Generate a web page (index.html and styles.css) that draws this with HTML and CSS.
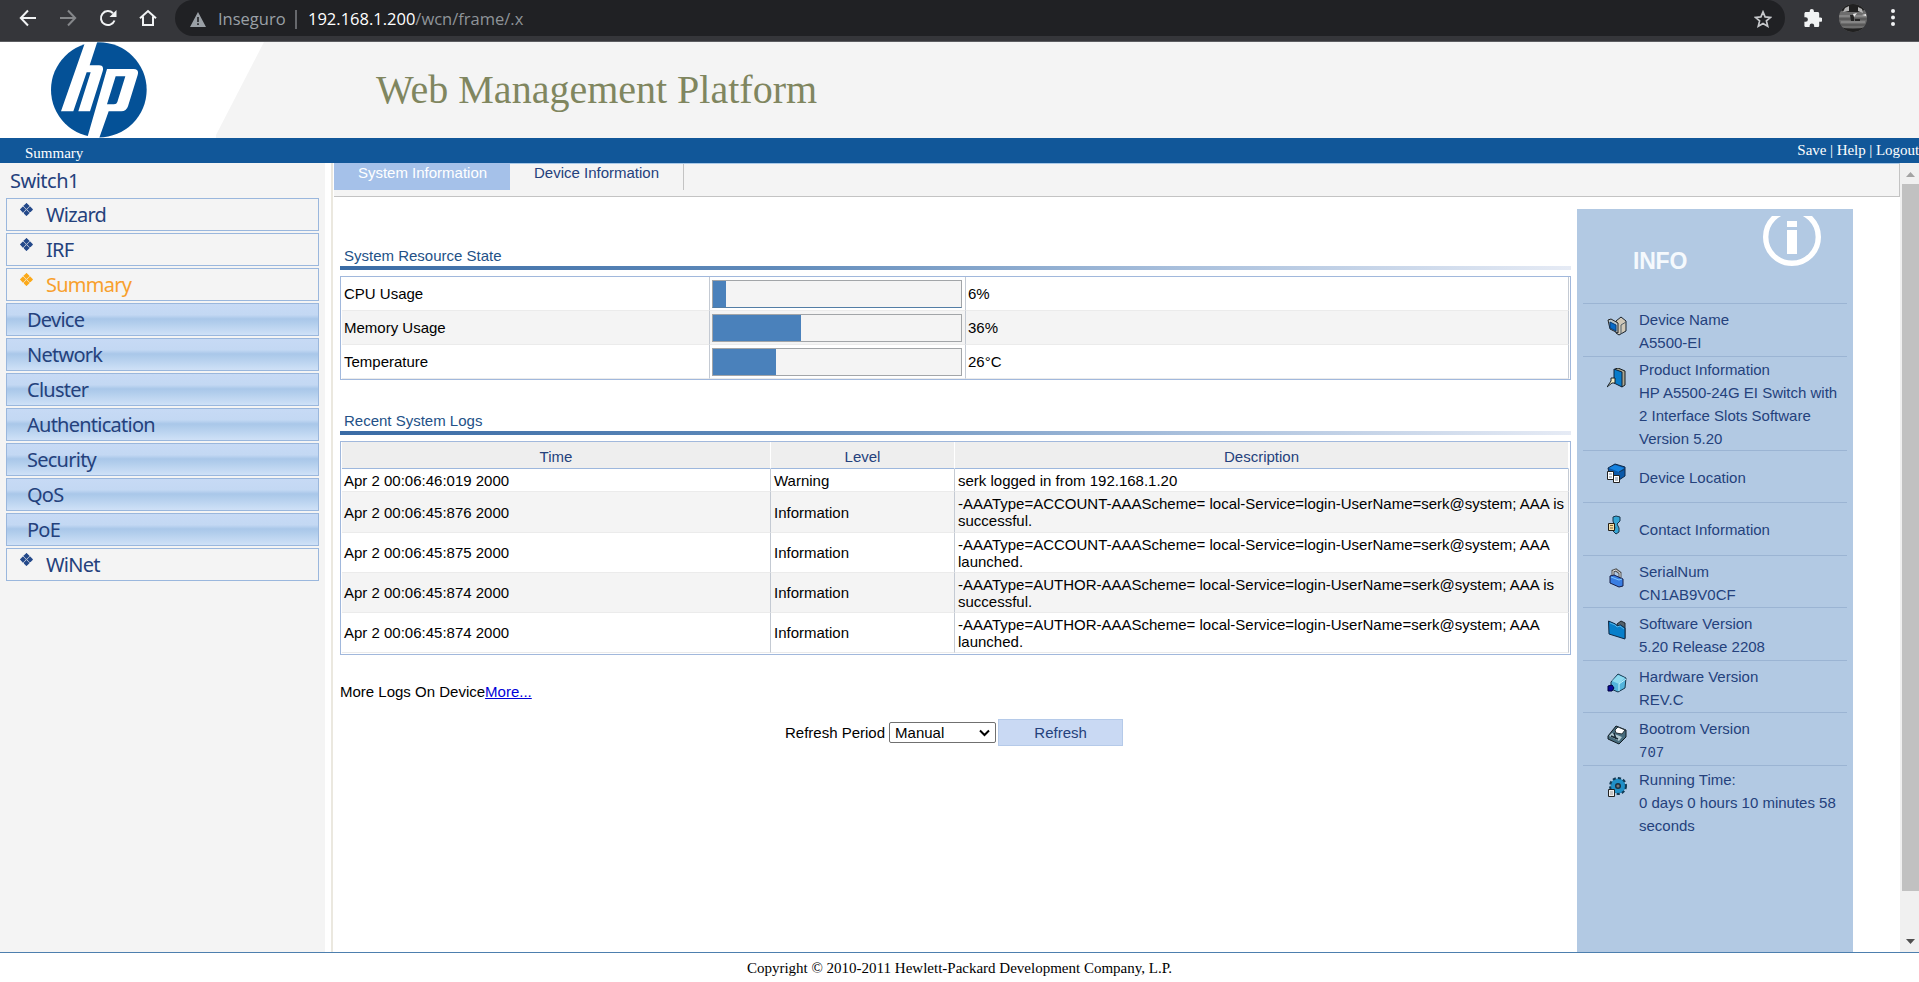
FILE: index.html
```html
<!DOCTYPE html>
<html lang="en">
<head>
<meta charset="utf-8">
<title>Web Management Platform</title>
<link rel="stylesheet" href="styles.css">
</head>
<body>
<svg class="defs" width="0" height="0">
  <defs>
    <g id="clover"><path d="M6.500 .3l2.700 2.700-2.700 2.700-2.700-2.700zM3 3.800l2.700 2.700L3 9.200.3 6.500zM10 3.800l2.700 2.700L10 9.200 7.300 6.500zM6.500 7.300l2.700 2.700-2.700 2.700-2.700-2.700z" stroke="currentColor" stroke-width="1" stroke-linejoin="round"/></g>
  </defs>
</svg>

<div class="browser">
  <div class="browser-nav">
    <svg width="18" height="18" viewBox="0 0 18 18" fill="none" stroke="#f1f3f4" stroke-width="2"><path d="M17 9H2M9 1.500L1.800 9 9 16.500"/></svg>
    <svg width="18" height="18" viewBox="0 0 18 18" fill="none" stroke="#85878a" stroke-width="2"><path d="M1 9h15M9 1.500L16.200 9 9 16.500"/></svg>
    <svg width="18" height="18" viewBox="0 0 18 18" fill="none" stroke="#f1f3f4" stroke-width="2"><path d="M15.500 11.500A7 7 0 1 1 14 4.200"/><path d="M17.500 1v7h-7z" fill="#f1f3f4" stroke="none"/></svg>
    <svg width="18" height="18" viewBox="0 0 18 18" fill="none" stroke="#f1f3f4" stroke-width="2"><path d="M1 9.200L9 2l8 7.200M4 7.500V16h10V7.500"/></svg>
  </div>
  <div class="omnibox">
    <svg width="16" height="15" viewBox="0 0 16 15"><path d="M8 0l8 15H0z" fill="#9aa0a6"/><path d="M7.200 5h1.600v5H7.200zM7.200 11.300h1.600v1.700H7.200z" fill="#202124"/></svg>
    <span class="insecure">Inseguro</span><span class="divider"></span><span class="host">192.168.1.200</span><span class="path">/wcn/frame/.x</span>
    <svg class="star" width="18" height="18" viewBox="0 0 18 18" fill="none" stroke="#c6c8cb" stroke-width="1.700"><path d="M9 1.900l2.100 5 5.400.5-4.100 3.500 1.300 5.300L9 13.400l-4.700 2.800 1.300-5.300L1.500 7.400l5.400-.5z"/></svg>
  </div>
  <div class="browser-tools">
    <svg width="18" height="18" viewBox="0 0 18 18"><path fill="#f1f3f4" d="M16.400 8.500h-1.200V4.700c0-.9-.7-1.600-1.600-1.600H9.900V2.100a2.100 2.100 0 0 0-4.200 0v1H2C1.100 3.100.4 3.800.4 4.700v3.500h1.200a2.300 2.300 0 0 1 0 4.600H.4v3.600c0 .9.700 1.600 1.600 1.600h3.600v-1.300a2.300 2.300 0 0 1 4.600 0V18h3.400c.9 0 1.600-.7 1.600-1.600v-3.700h1.200a2.100 2.100 0 0 0 0-4.200z"/></svg>
    <svg width="28" height="28" viewBox="0 0 28 28"><defs><clipPath id="avatar"><circle cx="14" cy="14" r="14"/></clipPath></defs><g clip-path="url(#avatar)"><path fill="#6d6d6d" d="M0 0h28v28H0z"/><path fill="#202020" d="M0 0h28v5l-8 3H8L0 6zM0 23q14 3 28 0v5H0z"/><path stroke="#8d8d8d" stroke-width="1.500" d="M0 12h28M2 18h24"/><path stroke="#555" stroke-width="1.500" d="M0 15h28M0 21h28"/><path fill="#b5b5b5" d="M6 4l4-2v5L4 8zM19 3l4 2 1 4-5-2z"/><path fill="#242424" d="M11 11h4v6h-3zM16 15h5v2h-5z"/><path fill="#eee" d="M14 10l4-1-3 4zM23 11l4-1v2z"/></g></svg>
    <svg width="4" height="18" viewBox="0 0 4 18" fill="#f1f3f4"><circle cx="2" cy="2" r="2"/><circle cx="2" cy="8.500" r="2"/><circle cx="2" cy="15" r="2"/></svg>
  </div>
</div>

<header class="banner">
  <svg class="logo" width="120" height="96" viewBox="0 12 360 288"><ellipse cx="176.500" cy="155.500" rx="143.500" ry="143" fill="#045197"/><path fill="#fff" d="M137 8h36L149 82h28q16 0 11 18l-38 120h-35l37-117h-12L100 220H63zM201 93h80q17 0 12 18l-29 94q-5 15-20 15h-38l-29 82h-36zM227 115l-26 84h21q8 0 10-7l24-77z"/></svg>
  <h1>Web Management Platform</h1>
</header>

<div class="crumbs"><span class="crumb">Summary</span><span class="session">Save | Help | Logout</span></div>

<div class="frames">
  <nav class="sidebar">
    <div class="device">Switch1</div>
    <a class="item leaf"><svg width="13" height="13"><use href="#clover"/></svg>Wizard</a>
    <a class="item leaf"><svg width="13" height="13"><use href="#clover"/></svg>IRF</a>
    <a class="item leaf current"><svg width="13" height="13"><use href="#clover"/></svg>Summary</a>
    <a class="item group">Device</a>
    <a class="item group">Network</a>
    <a class="item group">Cluster</a>
    <a class="item group">Authentication</a>
    <a class="item group">Security</a>
    <a class="item group">QoS</a>
    <a class="item group">PoE</a>
    <a class="item leaf"><svg width="13" height="13"><use href="#clover"/></svg>WiNet</a>
  </nav>

  <main class="main">
    <div class="tabs"><span class="tab active">System Information</span><span class="tab">Device Information</span></div>
    <div class="columns">
      <section class="report">
        <h2>System Resource State</h2>
        <table class="grid resources">
          <colgroup><col class="c-name"><col class="c-bar"><col></colgroup>
          <tr><td>CPU Usage</td><td class="bar-cell"><div class="bar cpu"><div class="fill" style="width:13px"></div></div></td><td>6%</td></tr>
          <tr><td>Memory Usage</td><td class="bar-cell"><div class="bar"><div class="fill" style="width:88px"></div></div></td><td>36%</td></tr>
          <tr><td>Temperature</td><td class="bar-cell"><div class="bar"><div class="fill" style="width:63px"></div></div></td><td>26°C</td></tr>
        </table>
        <h2>Recent System Logs</h2>
        <table class="grid logs">
          <colgroup><col class="c-time"><col class="c-level"><col></colgroup>
          <tr class="head"><th>Time</th><th>Level</th><th>Description</th></tr>
          <tr class="short"><td>Apr 2 00:06:46:019 2000</td><td>Warning</td><td>serk logged in from 192.168.1.20</td></tr>
          <tr class="tall"><td>Apr 2 00:06:45:876 2000</td><td>Information</td><td>-AAAType=ACCOUNT-AAAScheme= local-Service=login-UserName=serk@system; AAA is<br>successful.</td></tr>
          <tr><td>Apr 2 00:06:45:875 2000</td><td>Information</td><td>-AAAType=ACCOUNT-AAAScheme= local-Service=login-UserName=serk@system; AAA<br>launched.</td></tr>
          <tr><td>Apr 2 00:06:45:874 2000</td><td>Information</td><td>-AAAType=AUTHOR-AAAScheme= local-Service=login-UserName=serk@system; AAA is<br>successful.</td></tr>
          <tr><td>Apr 2 00:06:45:874 2000</td><td>Information</td><td>-AAAType=AUTHOR-AAAScheme= local-Service=login-UserName=serk@system; AAA<br>launched.</td></tr>
        </table>
        <p class="more">More Logs On Device<a href="#">More...</a></p>
        <div class="refresh"><span>Refresh Period</span><span class="select">Manual<svg width="11" height="8" viewBox="0 0 11 8" fill="none" stroke="#000" stroke-width="2"><path d="M1 1.500l4.500 4.500L10 1.500"/></svg></span><span class="button">Refresh</span></div>
      </section>

      <aside class="info">
        <div class="info-head"><span>INFO</span>
          <svg width="58" height="50" viewBox="0 0 58 50"><circle cx="29" cy="21" r="26.300" fill="none" stroke="#fff" stroke-width="5.400"/><path d="M24 5h10v6H24zM24 14h10v24H24z" fill="#fff"/></svg>
        </div>
        <div class="entry">
          <svg width="20" height="20" viewBox="0 0 20 20"><path fill="#d0c8b8" stroke="#17202b" d="M9 5l5-4 5 4v10l-7 4-3-2z"/><path stroke="#51606b" d="M14 9v9M14 9l5-3"/><path fill="#b9c5cc" stroke="#222" d="M1 4l3-1 7 4v10l-8-4z"/><path fill="#086ac7" stroke="#083b73" d="M3 6l6 3v6l-6-3z"/></svg>
          <div>Device Name<br>A5500-EI</div></div>
        <div class="entry product">
          <svg width="20" height="20" viewBox="0 0 20 20"><path fill="#aaa791" stroke="#151b1e" d="M8 1l3-1 7 3v14l-3 2z"/><path fill="#087ccb" stroke="#102238" d="M7 1l8 3v15l-8-4z"/><path fill="#f2edc5" stroke="#182027" d="M4 10h4v5H5l-5 4 4-6z"/></svg>
          <div>Product Information<br>HP A5500-24G EI Switch with<br>2 Interface Slots Software<br>Version 5.20</div></div>
        <div class="entry single">
          <svg width="20" height="20" viewBox="0 0 20 20"><path fill="#0a58a8" stroke="#0b2748" d="M1 5l7-4 10 3v9l-6 4-9-3z"/><path fill="#1583e0" d="M2 5l6-3 9 3-5 4z"/><path stroke="#14365b" d="M12 9l6-3"/><path fill="#fff" stroke="#222" d="M.5 8.500h6v8h-6zM6.500 12.500h6v7h-6z"/><path stroke="#7b8c9c" d="M2 11h3M2 14h3M8 15h3M8 17h3"/></svg>
          <div>Device Location</div></div>
        <div class="entry single">
          <svg width="20" height="20" viewBox="0 0 20 20"><path fill="#35a5d4" stroke="#17344a" d="M6 2l3-1 4 1v4l-3 3 2 4v4l-3 2-3-3 2-3-2-7z"/><path fill="#f2dfa8" stroke="#251f16" d="M1.500 8.500h6v7h-6z"/><path stroke="#816231" d="M3 10.500h3M3 13h3"/></svg>
          <div>Contact Information</div></div>
        <div class="entry">
          <svg width="20" height="20" viewBox="0 0 20 20"><path fill="none" stroke="#555" stroke-width="3" d="M6 9V3l3-1 4 3v6"/><path fill="none" stroke="#ddd" d="M6 9V3l3-1 4 3v6"/><path fill="#397de2" stroke="#151d48" d="M3 8l4-1 9 4v7l-4 1-9-4z"/><path fill="none" stroke="#7cc7ff" d="M4 9l8 3 3-1"/></svg>
          <div>SerialNum<br>CN1AB9V0CF</div></div>
        <div class="entry">
          <svg width="20" height="20" viewBox="0 0 20 20"><path fill="#53616a" stroke="#1d252d" d="M10 4l4-3 4 2v15l-6-3z"/><path fill="#087fca" stroke="#0d2846" d="M1.500 1l7 3 2 2 3-1 4.500 3v11L2 14z"/><path fill="none" stroke="#53b2e4" d="M3 3l5 2 2 2 3-1 4 3"/></svg>
          <div>Software Version<br>5.20 Release 2208</div></div>
        <div class="entry">
          <svg width="20" height="20" viewBox="0 0 20 20"><path fill="#54b4dc" stroke="#17374d" d="M4 9l7-8 8 4-1 10-7 4-7-3z"/><path fill="#8edaf0" d="M5 8l6-6 7 3-6 6z"/><path stroke="#c0f0fb" d="M12 11l7-5M12 11v7"/><path fill="#08089b" stroke="#00003e" d="M1 13l4-1 2 3-2 3H1z"/></svg>
          <div>Hardware Version<br>REV.C</div></div>
        <div class="entry">
          <svg width="20" height="20" viewBox="0 0 20 20"><path fill="#466b7c" stroke="#101b22" d="M1 11L9 1l10 4v7l-7 7-11-5z"/><path fill="#b2cad2" d="M2 11l3-3 10 4-3 4z"/><path fill="#fff" stroke="#29353b" d="M8 5l3-3 7 3-3 4-6-1z"/><path stroke="#172a36" stroke-width="1.500" d="M4 11l7 3M7 8l2 6"/></svg>
          <div>Bootrom Version<br><span class="mono">707</span></div></div>
        <div class="entry last">
          <svg width="20" height="20" viewBox="0 0 20 20"><circle cx="11" cy="9" r="7.500" fill="#1687be" stroke="#123a55" stroke-width="3" stroke-dasharray="3 2"/><circle cx="11" cy="9" r="7" fill="#208fc7"/><circle cx="11" cy="9" r="2.300" fill="#777" stroke="#193042" stroke-width="1.500"/><path fill="#eee" stroke="#222" d="M1.500 12.500h6v7h-6z"/><path stroke="#9a9a9a" d="M3 15h3M3 17h3"/></svg>
          <div>Running Time:<br>0 days 0 hours 10 minutes 58<br>seconds</div></div>
      </aside>
    </div>
  </main>

  <div class="scrollbar"><svg width="9" height="5"><path d="M0 5l4.500-5L9 5z" fill="#a3a3a3"/></svg><div class="thumb"></div><svg class="down" width="9" height="5"><path d="M0 0h9L4.500 5z" fill="#505050"/></svg></div>
</div>

<footer class="footer">Copyright © 2010-2011 Hewlett-Packard Development Company, L.P.</footer>
</body>
</html>
```
FILE: styles.css
```css
* { box-sizing: border-box; }
body { margin: 0; width: 1919px; height: 982px; overflow: hidden; display: flex; flex-direction: column; background: #fff; font: 15px/17px "Liberation Sans", Arial, sans-serif; color: #000; }
svg { flex: none; display: block; }
.defs { position: absolute; }

.browser { height: 42px; flex: none; display: flex; background: #35363a; border-bottom: 1px solid #5c5d61; }
.browser-nav { width: 175px; padding: 9px 0 0 19px; display: flex; gap: 22px; }
.omnibox { width: 1610px; height: 36px; border-radius: 18px; background: #202124; display: flex; align-items: center; padding: 2px 16px 0 15px; font: 16.500px/20px "Open Sans", sans-serif; color: #9aa0a6; }
.insecure { margin-left: 12px; width: 77px; white-space: nowrap; }
.divider { width: 2px; height: 19px; background: #66686c; margin-right: 11px; }
.host { color: #fff; }
.path { color: #8f9499; }
.star { margin-left: auto; margin-right: -3px; }
.browser-tools { display: flex; align-items: flex-start; padding: 9px 0 0 19px; gap: 24px; }
.browser-tools svg:nth-child(2) { margin: -5px 0 0 -7px; }

.banner { height: 96px; flex: none; display: flex; background: #f4f4f4; position: relative; }
.banner::before { content: ""; position: absolute; inset: 0 auto 0 0; width: 264px; background: #fff; clip-path: polygon(0 0, 100% 0, 216px 93px, 216px 100%, 0 100%); }
.logo { position: relative; margin-left: 40px; }
.banner h1 { margin: 26px 0 0 216px; font: 40px/44px "Liberation Serif", serif; color: #80865f; white-space: nowrap; }

.crumbs { height: 25px; flex: none; background: #115799; color: #fff; display: flex; justify-content: space-between; font: 15px/17px "Liberation Serif", serif; }
.crumb { margin: 7px 0 0 25px; }
.session { margin-top: 4px; white-space: nowrap; letter-spacing: -.05px; }

.frames { height: 789px; flex: none; display: flex; }
.sidebar { width: 325px; background: #f4f4f4; padding: 0 6px; display: flex; flex-direction: column; gap: 2px; font: 20px/33px "Noto Sans", Tahoma, sans-serif; letter-spacing: -.75px; color: #24417c; }
.device { height: 33px; padding-left: 4px; line-height: 36px; letter-spacing: -.5px; }
.item { width: 313px; height: 33px; flex: none; border: 1px solid #9ab7dd; line-height: 32px; display: flex; }
.group { padding-left: 20px; background: linear-gradient(#c7daf5 0%, #c3d8f3 35%, #a9c7e9 48%, #b1cdec 60%, #cfe1f7 100%); }
.leaf svg { margin: 4px 13px 0 13px; fill: #24498a; color: #24498a; }
.current { color: #f8a02c; }
.current svg { fill: #fba919; color: #fba919; }

.main { width: 1569px; margin-left: 6px; border-left: 2px solid #ebe8df; display: flex; flex-direction: column; }
.tabs { height: 34px; flex: none; background: #f4f4f4; border: 1px solid #c3c3c3; border-top-color: #a9c9e8; border-left: 0; display: flex; margin-left: 1px; }
.tab { height: 26px; line-height: 18px; width: 174px; text-align: center; color: #24417c; border-right: 1px solid #c3c3c3; }
.tab.active { width: 176px; height: 27px; padding-left: 1px; background: #a5c1e9; color: #fff; border: 0; margin-top: -1px; line-height: 20px; }
.columns { display: flex; height: 755px; }
.report { width: 1231px; margin-left: 7px; padding-top: 50px; }
.report h2 { margin: 0 0 6px; height: 23px; padding-left: 4px; font: 15px/18px "Liberation Sans", Arial, sans-serif; color: #235187; border-bottom: 4px solid; border-image: linear-gradient(90deg, #3a6ba5, #5f8aba 35%, #a8bfdc 68%, #e6ebf5) 1; }
.grid { width: 1231px; table-layout: fixed; border-collapse: separate; border-spacing: 0; border: 1px solid #a1b8dc; padding: 0 1px; }
.grid td { padding: 0 2px; border-bottom: 1px solid #ebebeb; border-right: 1px solid #c4cad3; vertical-align: middle; white-space: nowrap; }
.resources { height: 104px; margin-bottom: 32px; }
.c-name { width: 368px; }
.c-bar { width: 256px; }
.c-time { width: 429px; }
.c-level { width: 184px; }
.resources tr { height: 34px; }
.resources tr:nth-child(even), .logs tr:nth-child(odd) { background: #f4f4f4; }
.bar { width: 250px; height: 28px; background: #f4f4f4; border: 1px solid #a2a5a8; }
.bar.cpu { border-bottom-color: #527da5; }
.fill { height: 100%; background: #4a81bb; }
.logs { height: 214px; padding: 0 1px 1px; }
.logs td + td { padding-left: 3px; }
.logs tr { height: 40px; }
.logs tr.head { height: 27px; background: #eee; }
.logs tr.short { height: 23px; }
.logs tr.tall { height: 41px; }
.logs th { font-weight: normal; color: #24417c; padding: 3px 0 0; border-bottom: 1px solid #9db7dd; border-right: 1px solid #fff; }
.more { margin: 28px 0 0; }
.more a { color: #0000d8; }
.refresh { display: flex; align-items: center; margin: 19px 0 0 445px; height: 27px; }
.select { width: 107px; height: 21px; margin: 0 2px 0 4px; border: 1px solid #707070; border-radius: 2px; padding: 0 5px; display: flex; align-items: center; justify-content: space-between; }
.button { width: 125px; height: 27px; border: 1px solid #b5cae9; background: #c9d9f3; color: #24417c; text-align: center; line-height: 25px; }

.info { width: 276px; height: 743px; margin: 12px 0 0 6px; padding: 0 6px; background: #b2c9e3; color: #24417c; line-height: 23px; }
.info-head { height: 95px; border-bottom: 1px solid #9bb4d3; display: flex; justify-content: space-between; padding: 7px 26px 0 50px; font-size: 23px; font-weight: bold; color: #f5f9fd; letter-spacing: -.2px; }
.info-head span { margin-top: 34px; }
.entry { height: 52.500px; border-bottom: 1px solid #9bb4d3; padding: 4px 0 0 24px; display: flex; gap: 12px; white-space: nowrap; }
.entry svg { margin-top: 8px; }
.entry.product { height: 94px; padding-top: 1px; }
.entry.product svg { margin-top: 10px; }
.entry.single div { padding-top: 11px; }
.entry.last { border: 0; height: 90px; padding-top: 2px; }
.entry.last svg { margin-top: 9px; }
.mono { font: 14px "Liberation Mono", monospace; }

.scrollbar { width: 19px; margin-left: auto; background: #f0f0f0; padding: 9px 0 8px 2px; display: flex; flex-direction: column; align-items: center; }
.thumb { width: 17px; height: 707px; margin-top: 7px; background: #c1c1c1; }
.down { margin-top: auto; }
.footer { height: 30px; border-top: 1px solid #4d7fae; text-align: center; font: 15px/17px "Liberation Serif", serif; padding-top: 7px; }
```
